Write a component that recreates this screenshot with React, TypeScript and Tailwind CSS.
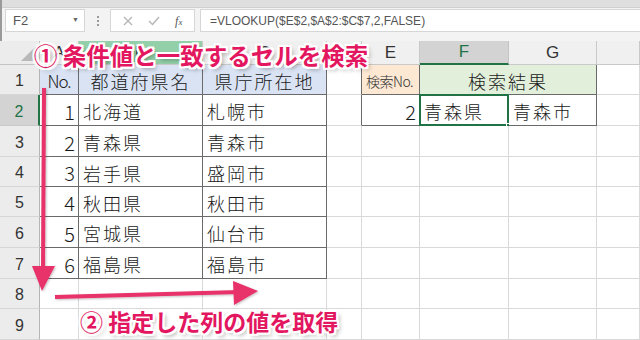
import React from "react";

const JP = "font-['Noto_Sans_CJK_JP',sans-serif]";
const UI = "font-['Liberation_Sans','Noto_Sans_CJK_JP',sans-serif]";

const prefectures: [number, string, string][] = [
  [1, "北海道", "札幌市"],
  [2, "青森県", "青森市"],
  [3, "岩手県", "盛岡市"],
  [4, "秋田県", "秋田市"],
  [5, "宮城県", "仙台市"],
  [6, "福島県", "福島市"],
];

const colLetters = ["A", "B", "C", "D", "E", "F", "G", ""];

function Toolbar() {
  return (
    <div className="h-[41px] bg-[#f3f3f3] border-l-2 border-[#9a9a9a]">
      <div className="h-[8px] bg-[#dedede] border-b border-[#d0d0d0]" />
      <div className="flex items-center pt-[1px]">
        <div className={`ml-[3px] flex h-[23px] w-[80px] items-center justify-between border border-[#d6d6d6] bg-white pl-[7px] pr-[5px] text-[13px] text-[#555] ${UI}`}>
          <span>F2</span>
          <span className="text-[7px] text-[#666]">▼</span>
        </div>
        <div className="flex w-[25px] flex-col items-center gap-[2px]">
          <span className="h-[2px] w-[2px] bg-[#9a9a9a]" />
          <span className="h-[2px] w-[2px] bg-[#9a9a9a]" />
          <span className="h-[2px] w-[2px] bg-[#9a9a9a]" />
        </div>
        <div className="flex h-[23px] w-[85px] items-center justify-around border border-[#d6d6d6] bg-white px-[4px]">
          <svg width="10" height="10" viewBox="0 0 10 10">
            <path d="M1 1L9 9M9 1L1 9" stroke="#b5b5b5" strokeWidth="1.3" />
          </svg>
          <svg width="12" height="10" viewBox="0 0 12 10">
            <path d="M1 5L4.5 8.5L11 1" stroke="#b5b5b5" strokeWidth="1.4" fill="none" />
          </svg>
          <span className="font-['Liberation_Serif',serif] text-[12px] italic text-[#555]">
            f<span className="text-[9px]">x</span>
          </span>
        </div>
        <div className={`ml-[5px] flex h-[23px] flex-1 items-center border border-r-0 border-[#d6d6d6] bg-white pl-[9px] text-[12px] text-[#555] ${UI}`}>
          =VLOOKUP($E$2,$A$2:$C$7,2,FALSE)
        </div>
      </div>
    </div>
  );
}

function cellBorder(r: number, c: number) {
  // r: 1..9, c: 0..7 (A..H)
  const inTable = r <= 7 && c <= 2;
  const inLookup = r <= 2 && c >= 4 && c <= 6;
  const leftOfLookup = r <= 2 && c === 3;
  if (inTable || inLookup) return "border-r border-b border-[#6a6a6a]";
  if (leftOfLookup) return "border-r border-b border-r-[#6a6a6a] border-b-[#d9d9d9]";
  return "border-r border-b border-[#d9d9d9]";
}

function cellBg(r: number, c: number) {
  if (r === 1 && c <= 2) return "bg-[#dae3f3]";
  if (r === 1 && c === 4) return "bg-[#fde9d3]";
  if (r === 1 && c === 5) return "bg-[#e2efda]";
  return "bg-white";
}

function CellContent({ r, c }: { r: number; c: number }) {
  const text = `text-[18px] font-light tracking-[2px] text-[#1a1a1a] ${JP}`;
  const num = `text-[20px] font-light text-[#1a1a1a] ${JP}`;
  if (r === 1) {
    if (c === 0) return <span className={`text-[17px] font-light tracking-[-1px] text-[#1a1a1a] ${JP}`}>No.</span>;
    if (c === 1) return <span className={text}>都道府県名</span>;
    if (c === 2) return <span className={text}>県庁所在地</span>;
    if (c === 4) return <span className={`text-[14px] font-light tracking-[-0.5px] text-[#333] ${JP}`}>検索No.</span>;
    if (c === 5) return <span className={text}>検索結果</span>;
    return null;
  }
  if (r >= 2 && r <= 7) {
    const row = prefectures[r - 2];
    if (c === 0) return <span className={num}>{row[0]}</span>;
    if (c === 1) return <span className={text}>{row[1]}</span>;
    if (c === 2) return <span className={text}>{row[2]}</span>;
  }
  if (r === 2) {
    if (c === 4) return <span className={num}>2</span>;
    if (c === 5) return <span className={text}>青森県</span>;
    if (c === 6) return <span className={text}>青森市</span>;
  }
  return null;
}

function cellAlign(r: number, c: number) {
  if (r === 1 && (c <= 2 || c === 5)) return "justify-center";
  if ((c === 0 && r >= 2 && r <= 7) || (r === 2 && c === 4)) return "justify-end pr-[3px]";
  return "justify-start pl-[4px]";
}

function Sheet() {
  const rows = [1, 2, 3, 4, 5, 6, 7, 8, 9];
  return (
    <div className="grid grid-cols-[40px_39px_124px_124px_35px_58px_89px_88px_43px] grid-rows-[24px_30px_31px_31px_30px_30px_31px_31px_30px_31px]">
      {/* select-all corner */}
      <div className="relative border-r border-b border-[#c4c4c4] bg-[#ececec]">
        <svg className="absolute bottom-[3px] right-[3px]" width="15" height="15" viewBox="0 0 15 15">
          <polygon points="15,0 15,15 0,15" fill="#b9b9b9" />
        </svg>
      </div>
      {colLetters.map((l, i) =>
        i === 5 ? (
          <div
            key={i}
            className={`flex items-center justify-center border-r border-b-2 border-r-[#c4c4c4] border-b-[#217346] bg-[#d3d3d3] text-[17px] text-[#217346] ${UI}`}
          >
            {l}
          </div>
        ) : (
          <div
            key={i}
            className={`flex items-center justify-center border-r border-b border-[#c9c9c9] ${i === 1 ? "bg-[#93cfa8]" : "bg-[#f0f0f0]"} text-[17px] text-[#333] ${UI}`}
          >
            {l}
          </div>
        )
      )}
      {rows.map((r) => (
        <React.Fragment key={r}>
          {r === 2 ? (
            <div className={`flex items-center justify-center border-r-2 border-b border-r-[#217346] border-b-[#c9c9c9] bg-[#d3d3d3] pt-[3px] text-[16px] text-[#217346] ${UI}`}>
              {r}
            </div>
          ) : (
            <div className={`flex items-center justify-center border-r border-b border-r-[#b5b5b5] border-b-[#d6d6d6] bg-[#ececec] pt-[3px] text-[16px] text-[#333] ${UI}`}>
              {r}
            </div>
          )}
          {colLetters.map((_, c) => {
            if (r === 1 && c === 6) return null;
            const span = r === 1 && c === 5 ? "col-span-2" : "";
            const selected = r === 2 && c === 5;
            return (
              <div
                key={c}
                className={`relative flex items-center pt-[3px] ${span} ${cellBorder(r, c)} ${cellBg(r, c)} ${cellAlign(r, c)}`}
              >
                <CellContent r={r} c={c} />
                {selected && (
                  <>
                    <div className="pointer-events-none absolute inset-[-1px] border-2 border-[#217346]" />
                    <div className="absolute bottom-[-4px] right-[-4px] h-[6px] w-[6px] border border-white bg-[#217346]" />
                  </>
                )}
              </div>
            );
          })}
        </React.Fragment>
      ))}
    </div>
  );
}

const glow =
  "[text-shadow:2px_0_0_#fff,-2px_0_0_#fff,0_2px_0_#fff,0_-2px_0_#fff,2px_2px_0_#fff,-2px_-2px_0_#fff,2px_-2px_0_#fff,-2px_2px_0_#fff,3px_3px_4px_rgba(0,0,0,0.35)]";

export default function App() {
  return (
    <div className="relative h-[340px] w-[640px] overflow-hidden bg-white">
      <Toolbar />
      <Sheet />

      <svg className="pointer-events-none absolute left-0 top-0" width="640" height="340" viewBox="0 0 640 340">
        <defs>
          <filter id="sh" x="-10%" y="-10%" width="130%" height="130%">
            <feDropShadow dx="1" dy="1" stdDeviation="1" floodColor="#000" floodOpacity="0.25" />
          </filter>
        </defs>
        <g fill="#e8306a" stroke="#e8306a" filter="url(#sh)">
          <line x1="44" y1="88" x2="43" y2="272" strokeWidth="4" />
          <polygon points="32,266 55,266 42,291" stroke="none" />
          <line x1="55" y1="297" x2="240" y2="292" strokeWidth="4" />
          <polygon points="233,281 258,291 234,305" stroke="none" />
        </g>
      </svg>

      <div className={`absolute left-[34px] top-[39px] whitespace-nowrap text-[23.5px] font-bold leading-[32px] text-[#e3175f] ${JP} ${glow}`}>
        ① 条件値と一致するセルを検索
      </div>
      <div className={`absolute left-[80px] top-[305px] whitespace-nowrap text-[23px] font-bold leading-[32px] text-[#e3175f] ${JP} ${glow}`}>
        ② 指定した列の値を取得
      </div>
    </div>
  );
}
